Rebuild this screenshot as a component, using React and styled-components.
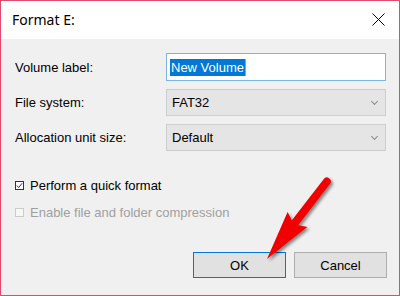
import React from "react";
import styled, { createGlobalStyle } from "styled-components";

const GlobalStyle = createGlobalStyle`
	html, body {
		margin: 0;
		padding: 0;
		background: #ffffff;
	}
	* {
		box-sizing: border-box;
	}
`;

function App() {
	return (
		<>
			<GlobalStyle />
			<Window>
				<TitleBar>
					<Title>Format E:</Title>
					<CloseButton aria-label="Close">
						<svg width="13" height="13" viewBox="0 0 13 13">
							<path d="M0.5 0.5 L12.5 12.5 M12.5 0.5 L0.5 12.5" stroke="#000" strokeWidth="1" />
						</svg>
					</CloseButton>
				</TitleBar>
				<Body>
					<FormGrid>
						<Label>Volume label:</Label>
						<TextBox>
							<Selected>New Volume</Selected>
							<Caret />
						</TextBox>
						<Label>File system:</Label>
						<Select>
							<span>FAT32</span>
							<Chevron />
						</Select>
						<Label>Allocation unit size:</Label>
						<Select>
							<span>Default</span>
							<Chevron />
						</Select>
					</FormGrid>
					<Checks>
						<CheckRow>
							<Box checked>
								<svg width="7" height="7" viewBox="0 0 7 7">
									<path d="M0.8 3.6 L2.7 5.5 L6.2 1.2" stroke="#333" strokeWidth="1" fill="none" />
								</svg>
							</Box>
							<span>Perform a quick format</span>
						</CheckRow>
						<CheckRow disabled>
							<Box />
							<span>Enable file and folder compression</span>
						</CheckRow>
					</Checks>
					<Buttons>
						<Button primary>OK</Button>
						<Button>Cancel</Button>
					</Buttons>
				</Body>
				<Arrow width="400" height="296" viewBox="0 0 400 296">
					<defs>
						<filter id="shadow" x="-20%" y="-20%" width="140%" height="140%">
							<feDropShadow dx="2" dy="2" stdDeviation="1.5" floodColor="#000" floodOpacity="0.45" />
						</filter>
					</defs>
					<g filter="url(#shadow)">
						<line x1="291" y1="228" x2="326.8" y2="181.6" stroke="#f00000" strokeWidth="8" strokeLinecap="round" />
						<polygon points="267,259 307.4,227.1 293.8,224.2 287.6,211.9" fill="#f00000" />
					</g>
				</Arrow>
			</Window>
		</>
	);
}

const Window = styled.div`
	position: relative;
	width: 400px;
	height: 296px;
	border: 1px solid #e3496c;
	display: flex;
	flex-direction: column;
	background: #f0f0f0;
	font-family: "Liberation Sans", Arial, sans-serif;
	font-size: 13px;
	color: #000;
`;

const TitleBar = styled.div`
	height: 38px;
	background: #ffffff;
	display: flex;
	align-items: center;
	justify-content: space-between;
	padding: 0 14px 2px 11px;
`;

const Title = styled.div`
	font-family: "Noto Sans", "Open Sans", sans-serif;
	font-size: 14px;
	color: #000;
`;

const CloseButton = styled.div`
	display: flex;
	width: 13px;
	height: 13px;
`;

const Body = styled.div`
	flex: 1;
	display: flex;
	flex-direction: column;
	padding: 14px 12px 17px 14px;
`;

const FormGrid = styled.div`
	display: grid;
	grid-template-columns: 151px 220px;
	grid-template-rows: 28px 27px 27px;
	row-gap: 8px;
	align-items: center;
`;

const Label = styled.div`
	white-space: nowrap;
`;

const TextBox = styled.div`
	height: 28px;
	background: #ffffff;
	border: 1px solid #7eb4ea;
	display: flex;
	align-items: center;
	padding-left: 3px;
`;

const Selected = styled.span`
	background: #0078d7;
	color: #ffffff;
	line-height: 17px;
	padding: 0 1px;
`;

const Caret = styled.span`
	width: 1px;
	height: 17px;
	background: #f08a3c;
`;

const Select = styled.div`
	height: 27px;
	background: #e5e5e5;
	border: 1px solid #cccccc;
	display: flex;
	align-items: center;
	justify-content: space-between;
	padding: 0 8px 0 5px;
`;

const Chevron = styled.span`
	width: 5px;
	height: 5px;
	border-right: 1px solid #8a8a8a;
	border-bottom: 1px solid #8a8a8a;
	transform: rotate(45deg);
	margin-top: -3px;
`;

const Checks = styled.div`
	display: flex;
	flex-direction: column;
	gap: 10px;
	margin-top: 26px;
`;

const CheckRow = styled.div`
	display: flex;
	align-items: center;
	height: 17px;
	gap: 6px;
	color: ${(p) => (p.disabled ? "#a0a0a0" : "#000")};
`;

const Box = styled.div`
	width: 9px;
	height: 9px;
	border: 1px solid ${(p) => (p.checked ? "#333333" : "#cccccc")};
	background: ${(p) => (p.checked ? "#ffffff" : "#f7f7f7")};
	display: flex;
	align-items: center;
	justify-content: center;
	svg {
		display: block;
	}
`;

const Buttons = styled.div`
	margin-top: auto;
	display: flex;
	justify-content: flex-end;
	gap: 8px;
`;

const Button = styled.div`
	width: 93px;
	height: 26px;
	background: #e1e1e1;
	border: 1px solid ${(p) => (p.primary ? "#0078d7" : "#adadad")};
	display: flex;
	align-items: center;
	justify-content: center;
`;

const Arrow = styled.svg`
	position: absolute;
	left: -1px;
	top: -1px;
	pointer-events: none;
`;

export default App;
